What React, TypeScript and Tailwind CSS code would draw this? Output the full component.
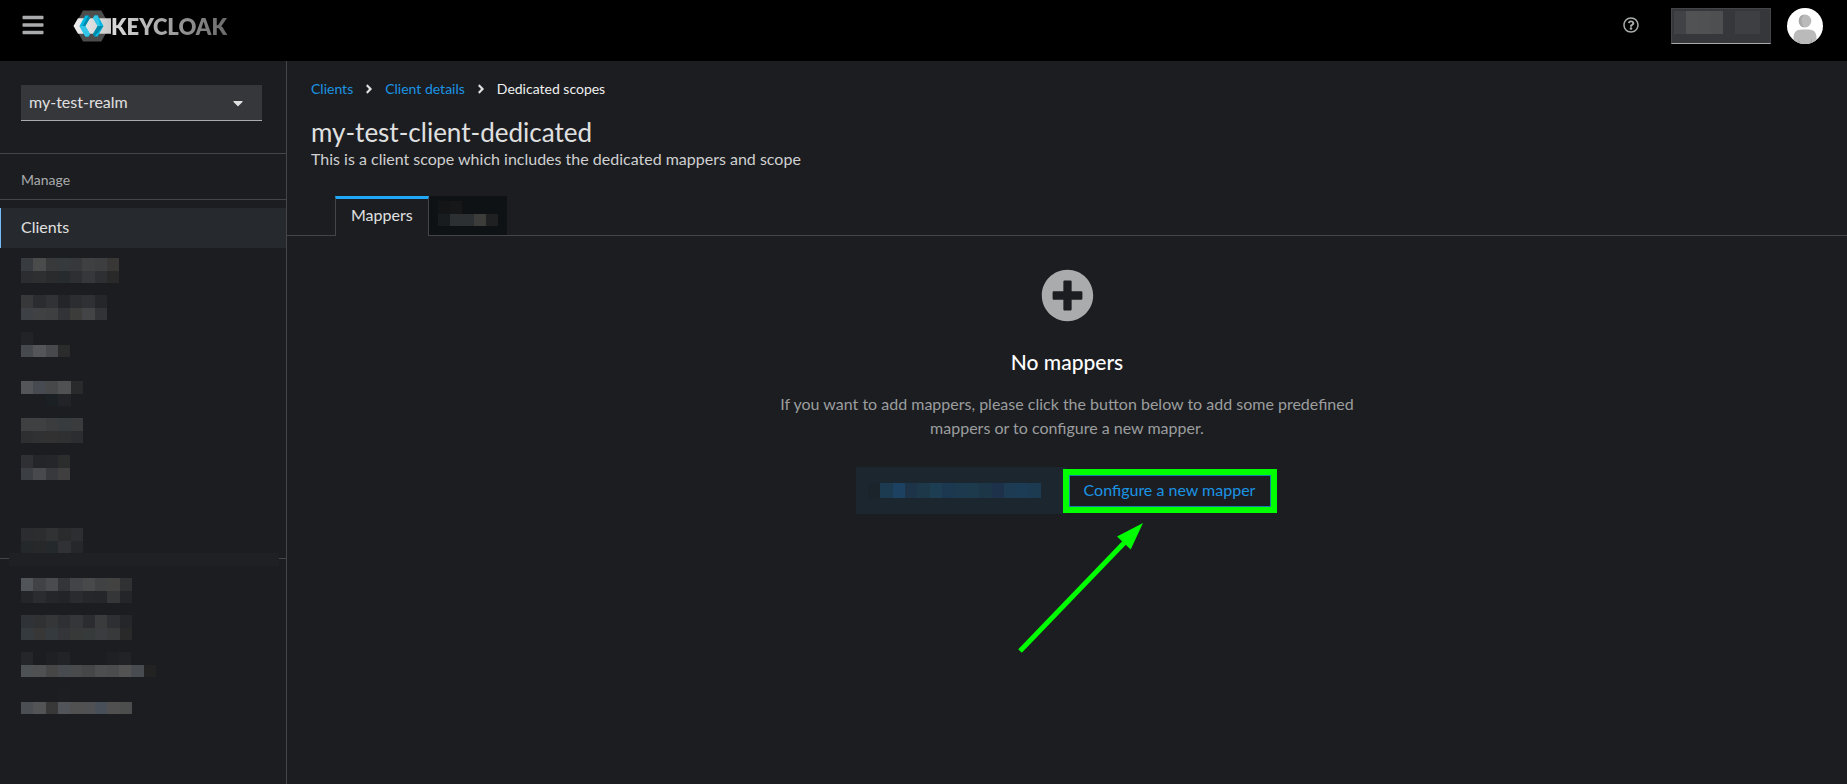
import React from 'react';
import {
  FaAngleRight,
  FaBars,
  FaCaretDown,
  FaPlusCircle,
  FaRegQuestionCircle,
} from 'react-icons/fa';

// Pixelated block, one colour per tile ('' = see-through)
const Mosaic = ({ rows, className }: { rows: string[][]; className: string }) => {
  const cols = Math.max(...rows.map((r) => r.length));
  return (
    <svg
      className={`block ${className}`}
      viewBox={`0 0 ${cols} ${rows.length}`}
      preserveAspectRatio="none"
      shapeRendering="crispEdges"
      aria-hidden="true"
    >
      {rows.map((row, y) =>
        row.map((fill, x) =>
          fill ? <rect key={`${x}-${y}`} x={x} y={y} width="1" height="1" fill={fill} /> : null
        )
      )}
    </svg>
  );
};

const manageItems = [
  {
    size: 'w-[98px] h-[25px]',
    rows: [
      ['#383c41', '#4b4b4b', '#38393a', '#363a3c', '#37383b', '#3f4042', '#3d3e40', '#383736'],
      ['#2b2d31', '#2e2f30', '#292b2c', '#282b2d', '#2e2f32', '#36373a', '#2e2f32', '#29292a'],
    ],
  },
  {
    size: 'w-[86px] h-[25px]',
    rows: [
      ['#37383a', '#2b2c2f', '#313235', '#242528', '#2c2d30', '#2f3033', '#252629'],
      ['#3d4145', '#404142', '#3e3f41', '#323336', '#3c3c3b', '#434446', '#323336'],
    ],
  },
  {
    size: 'w-[49px] h-[25px]',
    rows: [
      ['#222326', '', '', ''],
      ['#464a4e', '#545558', '#48494c', '#2b2b2b'],
    ],
  },
  {
    size: 'w-[62px] h-[37px]',
    rows: [
      ['', '', '', '', ''],
      ['#545558', '#474a50', '#474849', '#505152', '#292a2b'],
      ['', '', '#1b2025', '#222326', ''],
    ],
  },
  {
    size: 'w-[62px] h-[25px]',
    rows: [
      ['#3f4042', '#3f4042', '#3b3c3e', '#373b3e', '#3a3b3d'],
      ['#2e2f31', '#303132', '#303130', '#2f3032', '#2c2d30'],
    ],
  },
  {
    size: 'w-[49px] h-[25px]',
    rows: [
      ['#2f3033', '#242528', '#25262a', '#2b2c2c'],
      ['#3b3f43', '#48494c', '#38393c', '#3f3f3f'],
    ],
  },
];

const configureHeading = [
  ['#2b2c2f', '#2c2d2f', '#313234', '#2a2b2d', '#2d2e31'],
  ['#24282b', '#27282a', '#24292c', '#303134', '#26272a'],
];

const configureItems = [
  {
    size: 'w-[111px] h-[25px]',
    rows: [
      ['#515458', '#414245', '#4a4b4e', '#343538', '#434447', '#48494b', '#404143', '#424241', '#303133'],
      ['#242528', '#2b2c2f', '#252629', '#232427', '#2a2b2e', '#26272a', '#252629', '#353638', '#242528'],
    ],
  },
  {
    size: 'w-[111px] h-[25px]',
    rows: [
      ['#2f3337', '#303133', '#353638', '#2f3033', '#353639', '#2b2c2f', '#3a3b3d', '#2e2f32', '#252629'],
      ['#353a3f', '#373737', '#353a3f', '#343538', '#373838', '#363a3a', '#3b3c3f', '#38393b', '#292929'],
    ],
  },
  {
    size: 'w-[135px] h-[25px]',
    rows: [
      ['#252629', '', '#1f2023', '#222326', '', '', '', '#1f2023', '#222326', '', ''],
      ['#4d5153', '#4f5052', '#464646', '#474b50', '#494a4b', '#454648', '#4d4e4f', '#4b4c4e', '#525352', '#484c50', '#222222'],
    ],
  },
  {
    size: 'w-[111px] h-[25px]',
    rows: [
      ['', '', '', '#1d1e21', '', '', '', '', ''],
      ['#4b4f54', '#535456', '#383838', '#51555a', '#505150', '#505153', '#494f58', '#505050', '#4c4d4d'],
    ],
  },
];

const userRows = [
  ['#414245', '#515253', '#505153', '#4e4f50', '', '#3e3f43', '#3e3f43'],
];

const tabRows = [
  ['#131517', '#161718', '', '', ''],
  ['#191c1f', '#2d3033', '#2d3032', '#3c3c3b', '#1f2021'],
];

const buttonRows = [
  ['#1b232b', '#1d3b50', '#1d4160', '#1d3347', '#1d3849', '#1d3d52', '#1c3850', '#1c394d', '#1d394c', '#1c3547', '#1d324a', '#1d3b53', '#1c3b54', '#1d3b50'],
];

const Logo = () => (
  <a href="#" className="flex items-center ml-[29px]">
    <svg width="38" height="32" viewBox="0 0 38 32" aria-hidden="true">
      <defs>
        <linearGradient id="band" x1="0" x2="1">
          <stop offset="0" stopColor="#f0f0f0" />
          <stop offset="1" stopColor="#cacaca" />
        </linearGradient>
      </defs>
      <path d="M10 .5h18.300L37 16l-8.700 15.500H10L1.500 16z" fill="#4d4d4d" />
      <path d="M5 8.200H38v15.600H5L.5 16z" fill="url(#band)" />
      <path d="M12.300 5.500h3.200l1.500 2.500L12.300 16l4.700 8-1.500 2.500h-3.200L6.500 16z" fill="#00b8e3" />
      <path d="M6.500 16h5.800l4.700 8-1.500 2.500h-3.200z" fill="#33c6e9" />
      <path d="M15.500 5.500L17 8l-4.700 8H9.500z" fill="#008aaa" />
      <path d="M24.700 5.500h-3.200L20 8l4.700 8-4.700 8 1.500 2.500h3.200L30.500 16z" fill="#00b8e3" />
      <path d="M30.500 16h-5.800L20 24l1.500 2.500z" fill="#008aaa" />
      <path d="M24.700 5.500h-3.200L20 8l4.700 8h2.300z" fill="#33c6e9" />
    </svg>
    <span className="pt-px bg-linear-to-r from-[#dcdcdc] to-[#6a6a6a] bg-clip-text text-transparent text-[22px] leading-8 font-extrabold">
      KEYCLOAK
    </span>
  </a>
);

const Avatar = () => (
  <svg width="36" height="36" viewBox="0 0 36 36" className="ml-4" role="img">
    <defs>
      <clipPath id="round">
        <circle cx="18" cy="18" r="18" />
      </clipPath>
    </defs>
    <g clipPath="url(#round)">
      <rect width="36" height="36" fill="#fff" />
      <path d="M6.500 36v-6.500q0-8 8-8h7q8 0 8 8V36z" fill="#bababa" />
      <path d="M11 30l2.500 6H11zM25 30l-2.500 6H25z" fill="#a8a8a8" />
      <ellipse cx="18" cy="13" rx="6.300" ry="6.500" fill="#bababa" />
      <path d="M17 6.600a6.300 6.500 0 0 0 0 12.800q-5-6 0-12.800z" fill="#a8a8a8" />
    </g>
  </svg>
);

const Header = () => (
  <header className="h-[61px] bg-[#000000] flex items-center pl-[22px] pr-6 pb-[9px]">
    <button type="button" aria-label="Menu" className="pb-0.5 text-[#aaabac]">
      <FaBars size={24} className="-mx-px w-6" />
    </button>
    <Logo />
    <button type="button" aria-label="Help" className="ml-auto pb-0.5 text-[#aaabac]">
      <FaRegQuestionCircle size={16} />
    </button>
    <button
      type="button"
      aria-label="User"
      className="ml-8 w-[100px] h-9 bg-[#36373b] border border-[#444548] border-b-[#aaabac] pl-0.5 pt-0.5 flex items-start"
    >
      <Mosaic rows={userRows} className="w-[86px] h-[23px]" />
    </button>
    <Avatar />
  </header>
);

const Sidebar = () => (
  <nav className="w-[287px] shrink-0 border-r border-[#444548] pt-6">
    <div className="relative ml-[21px] mr-6">
      <select
        aria-label="Realm"
        className="block w-full h-9 appearance-none bg-[#36373b] border-b border-[#aaabac] px-2 pb-0.5 text-[#e0e0e0]"
      >
        <option>my-test-realm</option>
      </select>
      <FaCaretDown size={16} className="absolute right-4 top-2.5 text-[#e0e0e0] pointer-events-none" />
    </div>

    <h2 className="mt-8 border-y border-[#444548] pl-[21px] pt-4 pb-[9px] text-sm text-[#aaabac]">
      Manage
    </h2>
    <a
      href="#"
      className="mt-2 h-10 flex items-center pl-5 pb-0.5 border-l border-[#73bcf7] bg-[#26292d] text-[#e0e0e0]"
    >
      Clients
    </a>
    <ul className="mt-2.5 pl-[21px] flex flex-col gap-3">
      {manageItems.map((item, i) => (
        <li key={i}>
          <Mosaic rows={item.rows} className={item.size} />
        </li>
      ))}
    </ul>

    <Mosaic rows={configureHeading} className="mt-12 ml-[21px] w-[62px] h-[25px]" />
    <div className="flex h-[13px]">
      <div className="w-[9px] h-1.5 border-b border-[#444548]" />
      <div className="flex-1 bg-[#1f2023]" />
      <div className="w-[7px] h-1.5 border-b border-[#444548]" />
    </div>
    <ul className="mt-3 pl-[21px] flex flex-col gap-3">
      {configureItems.map((item, i) => (
        <li key={i}>
          <Mosaic rows={item.rows} className={item.size} />
        </li>
      ))}
    </ul>
  </nav>
);

const Breadcrumb = () => (
  <nav className="flex items-center gap-3 text-sm text-[#1c94e4]">
    <a href="#">Clients</a>
    <FaAngleRight size={14} className="w-2 text-[#e0e0e0]" />
    <a href="#">Client details</a>
    <FaAngleRight size={14} className="w-2 text-[#e0e0e0]" />
    <span className="text-[#f0f0f0]">Dedicated scopes</span>
  </nav>
);

const EmptyState = () => (
  <section className="mt-[33px] flex flex-col items-center text-center">
    <FaPlusCircle size={53} className="text-[#aaabac]" />
    <h2 className="mt-6 text-[21px] leading-8 font-medium text-white">No mappers</h2>
    <p className="mt-3.5 max-w-[600px] leading-6 text-[#9c9d9e]">
      If you want to add mappers, please click the button below to add some predefined mappers or to
      configure a new mapper.
    </p>
    <div className="mt-[27px] flex items-center">
      <div className="w-[210px] h-[47px] bg-[#1c262e] pt-4 pl-3">
        <Mosaic rows={buttonRows} className="w-[173px] h-[15px]" />
      </div>
      <div className="relative -ml-[3px] mr-0.5">
        <button
          type="button"
          className="block w-[214px] h-11 pb-0.5 border-[6px] border-[#00ff00] inset-shadow-[0_0_0_1px_#1780a8] text-[#1c94e4]"
        >
          Configure a new mapper
        </button>
        <svg
          width="134"
          height="137"
          viewBox="0 0 134 137"
          className="absolute -left-[50px] top-[50px]"
          fill="#00ff00"
          aria-hidden="true"
        >
          <path d="M7 132L112 23" stroke="#00ff00" strokeWidth="5" />
          <path d="M130 4L104 17.500 117.700 30.500z" />
        </svg>
      </div>
    </div>
  </section>
);

const App = () => (
  <div className="min-h-screen bg-[#1b1d21] flex flex-col text-base text-[#e0e0e0] font-[Lato,sans-serif]">
    <Header />
    <div className="flex-1 flex">
      <Sidebar />
      <main className="flex-1">
        <div className="px-6 pt-[18px]">
          <Breadcrumb />
          <h1 className="mt-[18px] text-[26px] leading-[30px]">my-test-client-dedicated</h1>
          <p className="leading-6 text-[#d0d0d0]">
            This is a client scope which includes the dedicated mappers and scope
          </p>
        </div>
        <div role="tablist" className="mt-[25px] pl-12 flex border-b border-[#444548]">
          <button
            type="button"
            role="tab"
            aria-selected="true"
            className="h-10 -mb-px px-[15px] pb-1.5 bg-[#1b1d21] border-x border-x-[#444548] border-t-3 border-t-[#1fa7f8]"
          >
            Mappers
          </button>
          <button type="button" role="tab" aria-label="Scope" className="w-[78px] bg-[#0f1214] pl-[9px] pb-1">
            <Mosaic rows={tabRows} className="w-[60px] h-[25px]" />
          </button>
        </div>
        <EmptyState />
      </main>
    </div>
  </div>
);

export default App;
